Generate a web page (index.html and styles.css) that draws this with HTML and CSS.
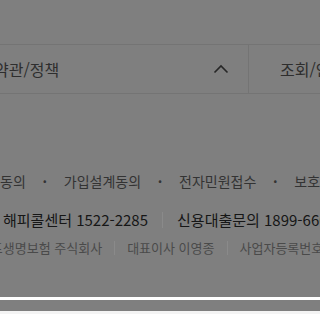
FILE: index.html
```html
<!DOCTYPE html>
<html lang="ko">
<head>
    <meta charset="UTF-8">
    <meta name="viewport" content="width=device-width, initial-scale=1.0">
    <title>푸터</title>
    <link rel="stylesheet" href="styles.css">
</head>
<body>

    <div class="footer">
        <div class="top-space"></div>

        <div class="menu">
            <div class="menu-item first">
                <span>약관/정책</span>
                <svg class="chevron" width="16" height="10" viewBox="0 0 16 10">
                    <polyline points="1.5,8.5 8,2 14.5,8.5" fill="none" stroke="#262626" stroke-width="1.6"/>
                </svg>
            </div>
            <div class="menu-item second">
                <span>조회/안내</span>
            </div>
        </div>

        <div class="links">
            <span>동의</span>
            <span class="dot">·</span>
            <span>가입설계동의</span>
            <span class="dot">·</span>
            <span>전자민원접수</span>
            <span class="dot">·</span>
            <span>보호금융상품</span>
        </div>

        <div class="calls">
            <span>해피콜센터 1522-2285</span>
            <span class="bar"></span>
            <span>신용대출문의 1899-6600</span>
        </div>

        <div class="info">
            <span>신한라이프생명보험 주식회사</span>
            <span class="bar"></span>
            <span>대표이사 이영종</span>
            <span class="bar"></span>
            <span>사업자등록번호 104-81-26747</span>
        </div>
    </div>

    <div class="sheet-line"></div>
    <div class="sheet-gap"></div>
    <div class="sheet"></div>

</body>
</html>
```

FILE: styles.css
```css
body {
    margin: 0;
    background-color: #7f7f7f;
    font-family: "Noto Sans CJK KR", "Noto Sans", sans-serif;
    overflow: hidden;
}

.footer {
    height: 297px;
    overflow: hidden;
}

.top-space {
    height: 44px;
}

.menu {
    display: flex;
    height: 48px;
    border-top: 1px solid #747474;
    border-bottom: 1px solid #747474;
    margin-left: -6px;
    white-space: nowrap;
}

.menu-item {
    display: flex;
    align-items: center;
    flex-shrink: 0;
    font-size: 16px;
    color: #2e2e2e;
}

.menu-item.first {
    width: 254px;
    justify-content: space-between;
    padding-right: 19px;
    box-sizing: border-box;
}

.menu-item.second {
    border-left: 1px solid #747474;
    padding-left: 31px;
}

.chevron {
    display: block;
}

.links, .calls, .info {
    display: flex;
    align-items: center;
    white-space: nowrap;
}

.links > span, .calls > span, .info > span {
    flex-shrink: 0;
}

.links {
    margin-top: 77px;
    font-size: 14px;
    color: #333;
}

.links .dot {
    width: 38px;
    text-align: center;
    font-weight: bold;
}

.calls {
    margin-top: 18px;
    margin-left: 3px;
    font-size: 15px;
    color: #161616;
}

.bar {
    display: inline-block;
    width: 1px;
    height: 16px;
    background-color: #8a8a8a;
    margin: 0 14px;
}

.info {
    margin-top: 8px;
    margin-left: -57px;
    font-size: 13px;
    color: #4a4a4a;
}

.info .bar {
    height: 14px;
    margin: 0 12px;
}

.sheet-line {
    height: 3px;
    background-color: #ffffff;
}

.sheet-gap {
    height: 11px;
}

.sheet {
    height: 10px;
    background-color: #f4f4f4;
}
```
